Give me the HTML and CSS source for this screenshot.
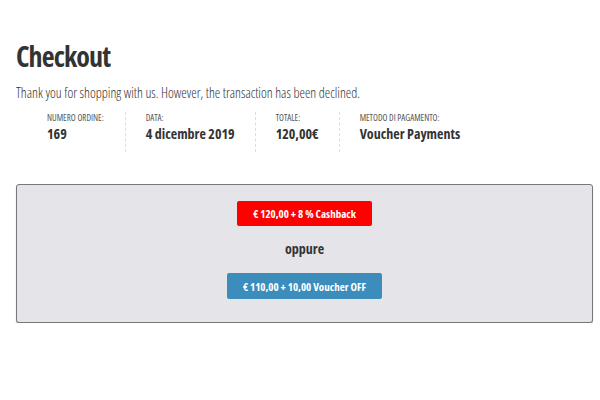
FILE: index.html
```html
<!DOCTYPE html>
<html>
<head>
<meta charset="utf-8">
<link rel="stylesheet" href="styles.css">
</head>
<body>
<div class="page">
  <h1 class="title">Checkout</h1>
  <p class="intro">Thank you for shopping with us. However, the transaction has been declined.</p>
  <ul class="details">
    <li class="detail"><span class="label">Numero ordine:</span><strong class="value">169</strong></li>
    <li class="detail"><span class="label">Data:</span><strong class="value">4 dicembre 2019</strong></li>
    <li class="detail"><span class="label">Totale:</span><strong class="value">120,00€</strong></li>
    <li class="detail"><span class="label">Metodo di pagamento:</span><strong class="value">Voucher Payments</strong></li>
  </ul>
  <div class="choice">
    <button class="btn btn-red">€ 120,00 + 8 % Cashback</button>
    <div class="or">oppure</div>
    <button class="btn btn-blue">€ 110,00 + 10,00 Voucher OFF</button>
  </div>
</div>
</body>
</html>
```
FILE: styles.css
```css
* { box-sizing: border-box; }
body {
  margin: 0;
  background: #fff;
  font-family: "Open Sans", sans-serif;
  font-stretch: 75%;
  color: #333;
}
.page { padding: 38px 7px 0 16px; }
.title {
  margin: 0;
  font-size: 28px;
  font-weight: 700;
  letter-spacing: -0.9px;
  line-height: 36px;
  color: #333;
}
.intro {
  margin: 9px 0 0;
  font-size: 13.8px;
  font-weight: 300;
  line-height: 20px;
  color: #333;
}
.details {
  list-style: none;
  margin: 9px 0 0;
  padding: 0 0 0 31px;
  display: flex;
}
.detail {
  display: flex;
  flex-direction: column;
  padding: 0 20px 8px 0;
  margin-right: 20px;
  border-right: 1px dashed #ddd;
}
.detail:first-child { padding-right: 21px; }
.detail:last-child { border-right: 0; }
.label {
  font-size: 9px;
  font-weight: 400;
  line-height: 12px;
  text-transform: uppercase;
  color: #555;
}
.value {
  font-size: 14px;
  line-height: 20px;
  font-weight: 700;
  color: #333;
}
.choice {
  margin-top: 32px;
  background: #e4e4e9;
  border: 1px solid #777;
  border-radius: 3px;
  box-shadow: 0 1px 1px #aaa;
  height: 139px;
  display: flex;
  flex-direction: column;
  align-items: center;
  padding-top: 16px;
}
.btn {
  border: 0;
  border-radius: 2px;
  font-family: inherit;
  font-stretch: 75%;
  font-weight: 700;
  font-size: 11px;
  color: #fff;
  height: 25px;
  padding: 0 16px;
}
.btn-red { background: #ff0000; }
.btn-blue { background: #3c8dbc; height: 26px; }
.or {
  font-size: 14px;
  font-weight: 700;
  line-height: 20px;
  margin: 13px 0 14px;
}
```
